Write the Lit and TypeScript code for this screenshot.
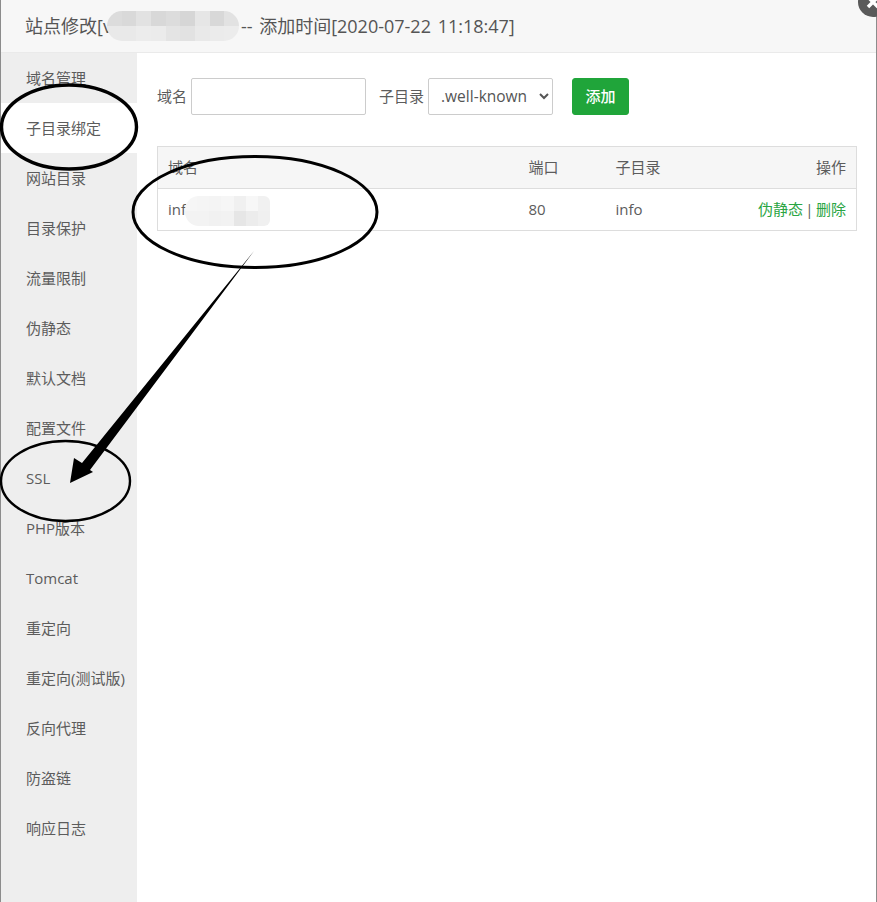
import { LitElement, html, css, svg } from "lit";
import { customElement } from "lit/decorators.js";

const MENU = ["域名管理","子目录绑定","网站目录","目录保护","流量限制","伪静态","默认文档","配置文件","SSL","PHP版本","Tomcat","重定向","重定向(测试版)","反向代理","防盗链","响应日志"];

const TITLE_CELLS = [
  ["#dcdcdc","#d9d9d9","#e2e2e2","#d8d8d8","#dcdcdc","#d6d6d6","#e6e6e6","#d8d8d8","#e2e2e2"],
  ["#e9e9e9","#e9e9e9","#ececec","#ebebeb","#e4e4e4","#e2e2e2","#e9e9e9","#ebebeb","#ececec"],
];
const ROW_CELLS = [
  ["#f6f6f6","#f5f5f5","#f4f4f4","#f6f6f6","#f0f0f0","#f7f7f7","#f1f1f1"],
  ["#f3f3f3","#f3f3f3","#f1f1f1","#f2f2f2","#e6e6e6","#ececec","#f0f0f0"],
];

function patch(rows: string[][], cls: string) {
  return html`<span class="patch ${cls}">${rows.map(r => html`<span class="pr">${r.map(c => html`<i style="background:${c}"></i>`)}</span>`)}</span>`;
}

@customElement("app-root")
export class AppRoot extends LitElement {
  static styles = css`
    :host { display: block; width: 877px; height: 902px; position: relative; overflow: hidden; background: #fff;
      font-family: "Open Sans", "Noto Sans CJK SC", sans-serif; color: #5c5c5c; font-size: 15px; }
    .frame { height: 902px; display: flex; flex-direction: column; border-left: 1px solid #8c8c8c; border-right: 1px solid #8c8c8c; box-sizing: border-box; }
    .head { height: 53px; box-sizing: border-box; flex: none; background: #f7f7f7; border-bottom: 1px solid #eaeaea;
      padding: 0 0 0 24px; display: flex; align-items: center; font-size: 18px; line-height: 52px; color: #555; white-space: pre; }
    .tail { word-spacing: 2px; }
    .patch { display: inline-flex; flex-direction: column; overflow: hidden; }
    .pr { display: flex; flex: 1; }
    .pr i { flex: 1; display: block; }
    .p-title { width: 132px; height: 30px; border-radius: 15px; margin: 0 2px 0 -5px; }
    .p-row { width: 85px; height: 30px; border-radius: 14px 6px 6px 14px; margin-left: -1px; position: relative; top: 2px; }
    .body { flex: 1; display: flex; min-height: 0; }
    .side { width: 136px; flex: none; background: #eeeeee; }
    .side div { height: 50px; line-height: 50px; padding-left: 25px; font-size: 15px; white-space: nowrap; }
    .side div.on { background: #fff; }
    .main { flex: 1; padding: 25px 19px 0 20px; }
    .form { display: flex; align-items: center; height: 37px; }
    .lbl { margin-right: 4px; padding-bottom: 2px; }
    input, select { box-sizing: border-box; height: 37px; border: 1px solid #ccc; border-radius: 2px; background: #fff; font: inherit; color: #555; }
    input { width: 175px; margin-right: 13px; padding: 0 8px; }
    select { width: 125px; padding: 0 4px 2px 8px; margin-right: 19px; font-size: 15.5px; }
    button { width: 57px; height: 37px; border: 1px solid #20a53a; border-radius: 3px; background: #20a53a; color: #fff; font: inherit; font-size: 15px; font-weight: 500; padding: 0 0 2px; }
    table { margin-top: 31px; width: 700px; border-collapse: collapse; table-layout: fixed; border: 1px solid #ddd; }
    th, td { padding: 0 10px 2px; font-weight: 400; text-align: left; height: 42px; box-sizing: border-box; font-size: 15px; }
    th { background: #f6f6f6; border-bottom: 1px solid #ddd; }
    .r { text-align: right; }
    .ops { word-spacing: -1.5px; }
    a { color: #2aa543; }
    .cell { display: flex; align-items: center; white-space: nowrap; }
    .close { position: absolute; left: 858px; top: -13px; width: 30px; height: 30px; }
    .marks { position: absolute; left: 0; top: 0; width: 877px; height: 902px; pointer-events: none; }
  `;

  render() {
    return html`
      <div class="frame">
        <div class="head"><span>站点修改[v</span>${patch(TITLE_CELLS, "p-title")}<span class="tail">-- 添加时间[2020-07-22 11:18:47]</span></div>
        <div class="body">
          <nav class="side">${MENU.map((m, i) => html`<div class=${i === 1 ? "on" : ""}>${m}</div>`)}</nav>
          <section class="main">
            <div class="form">
              <span class="lbl">域名</span><input />
              <span class="lbl">子目录</span>
              <select><option>.well-known</option></select>
              <button>添加</button>
            </div>
            <table>
              <colgroup><col style="width:361px" /><col style="width:87px" /><col style="width:100px" /><col /></colgroup>
              <tr><th>域名</th><th>端口</th><th>子目录</th><th class="r">操作</th></tr>
              <tr>
                <td><span class="cell">inf${patch(ROW_CELLS, "p-row")}</span></td>
                <td>80</td><td>info</td>
                <td class="r ops"><a>伪静态</a> | <a>删除</a></td>
              </tr>
            </table>
          </section>
        </div>
      </div>
      <svg class="close" viewBox="0 0 30 30">
        <circle cx="15" cy="15" r="15" fill="#5a5a5a" />
        <path d="M10 10 20 20M20 10 10 20" stroke="#fff" stroke-width="3.5" />
      </svg>
      <svg class="marks" viewBox="0 0 877 902">
        ${svg`
          <g fill="none" stroke="#000">
            <ellipse cx="69" cy="127" rx="67.5" ry="42" stroke-width="3.4" />
            <ellipse cx="255" cy="212" rx="122" ry="55.5" stroke-width="3" />
            <ellipse cx="65.5" cy="481" rx="64.5" ry="40" stroke-width="2.4" />
          </g>
          <polygon fill="#000" points="254,251 90,470 93,472 70,483 74,458 82,463" />
        `}
      </svg>
    `;
  }
}
